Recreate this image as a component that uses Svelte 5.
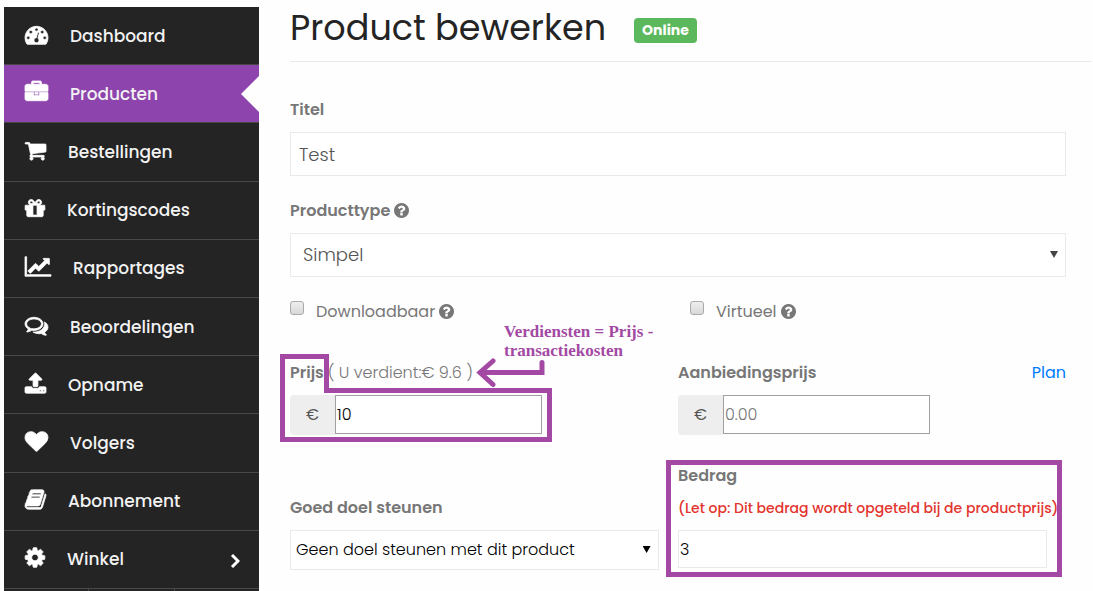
<script>
  const menu = [
    { label: 'Dashboard', box: '0 0 1792 1792', width: 23, path: 'M384 1152q0-53-37.5-90.5t-90.5-37.5-90.5 37.5-37.5 90.5 37.5 90.5 90.5 37.5 90.5-37.5 37.5-90.5zm192-448q0-53-37.5-90.5t-90.5-37.5-90.5 37.5-37.5 90.5 37.5 90.5 90.5 37.5 90.5-37.5 37.5-90.5zm428 481l101-382q6-26-7.5-48.5t-38.5-29.5-48 6.5-30 39.5l-101 382q-60 5-107 43.5t-63 98.5q-20 77 20 146t117 89 146-20 89-117q16-60-6-117t-72-91zm660-33q0-53-37.5-90.5t-90.5-37.5-90.5 37.5-37.5 90.5 37.5 90.5 90.5 37.5 90.5-37.5 37.5-90.5zm-640-640q0-53-37.5-90.5t-90.5-37.5-90.5 37.5-37.5 90.5 37.5 90.5 90.5 37.5 90.5-37.5 37.5-90.5zm448 192q0-53-37.5-90.5t-90.5-37.5-90.5 37.5-37.5 90.5 37.5 90.5 90.5 37.5 90.5-37.5 37.5-90.5zm320 448q0 261-141 483-19 29-54 29h-1402q-35 0-54-29-141-221-141-483 0-182 71-348t191-286 286-191 348-71 348 71 286 191 191 286 71 348z' },
    { label: 'Producten', active: true, box: '0 0 1792 1792', width: 23, path: 'M640 256h512v-128h-512v128zm1152 640v480q0 66-47 113t-113 47h-1472q-66 0-113-47t-47-113v-480h672v160q0 26 19 45t45 19h320q26 0 45-19t19-45v-160h672zm-768 0v128h-256v-128h256zm768-480v384h-1792v-384q0-66 47-113t113-47h352v-160q0-40 28-68t68-28h576q40 0 68 28t28 68v160h352q66 0 113 47t47 113z' },
    { label: 'Bestellingen', box: '64 0 1664 1792', width: 21, path: 'M704 1536q0 52-38 90t-90 38-90-38-38-90 38-90 90-38 90 38 38 90zm896 0q0 52-38 90t-90 38-90-38-38-90 38-90 90-38 90 38 38 90zm128-1088v512q0 24-16.5 42.5t-40.5 21.5l-1044 122q13 60 13 70 0 16-24 64h920q26 0 45 19t19 45-19 45-45 19h-1024q-26 0-45-19t-19-45q0-11 8-31.5t16-36 21.5-40 15.5-29.5l-177-823h-204q-26 0-45-19t-19-45 19-45 45-19h256q16 0 28.5 6.5t19.5 15.5 13 24.5 8 26 5.5 29.5 4.5 26h1201q26 0 45 19t19 45z' },
    { label: 'Kortingscodes', box: '128 0 1536 1792', width: 20, path: 'M1056 1356v-716h-320v716q0 25 18 38.5t46 13.5h192q28 0 46-13.5t18-38.5zm-456-844h195l-126-161q-26-31-69-31-40 0-68 28t-28 68 28 68 68 28zm688-96q0-40-28-68t-68-28q-43 0-69 31l-125 161h194q40 0 68-28t28-68zm376 256v320q0 14-9 23t-23 9h-96v416q0 40-28 68t-68 28h-1088q-40 0-68-28t-28-68v-416h-96q-14 0-23-9t-9-23v-320q0-14 9-23t23-9h440q-93 0-158.5-65.5t-65.5-158.5 65.5-158.5 158.5-65.5q107 0 168 77l128 165 128-165q61-77 168-77 93 0 158.5 65.5t65.5 158.5-65.5 158.5-158.5 65.5h440q14 0 23 9t9 23z' },
    { label: 'Rapportages', box: '0 0 2048 1792', width: 26, path: 'M2048 1536v128h-2048v-1536h128v1408h1920zm-128-1248v435q0 21-19.5 29.5t-35.5-7.5l-121-121-633 633q-10 10-23 10t-23-10l-233-233-416 416-192-192 585-585q10-10 23-10t23 10l233 233 464-464-121-121q-16-16-7.5-35.5t29.5-19.5h435q14 0 23 9t9 23z' },
    { label: 'Beoordelingen', box: '0 0 1792 1792', width: 23, path: 'M704 384q-153 0-286 52t-211.5 141-78.5 191q0 82 53 158t149 132l97 56-35 84q34-20 62-39l44-31 53 10q78 14 153 14 153 0 286-52t211.5-141 78.5-191-78.5-191-211.5-141-286-52zm0-128q191 0 353.5 68.5t256.5 186.5 94 257-94 257-256.5 186.5-353.5 68.5q-86 0-176-16-124 88-278 128-36 9-86 16h-3q-11 0-20.5-8t-11.5-21q-1-3-1-6.5t.5-6.5 2-6l2.5-5 3.5-5.5 4-5 4.5-5 4-4.5q5-6 23-25t26-29.5 22.5-29 25-38.5 20.5-44q-124-72-195-177t-71-224q0-139 94-257t256.5-186.5 353.5-68.5zm822 1169q10 24 20.5 44t25 38.5 22.5 29 26 29.5 23 25q1 1 4 4.5t4.5 5 4 5 3.5 5.5l2.5 5 2 6 .5 6.5-1 6.5q-3 14-13 22t-22 7q-50-7-86-16-154-40-278-128-90 16-176 16-271 0-472-132 58 4 88 4 161 0 309-45t264-129q125-92 192-212t67-254q0-77-23-152 129 71 204 178t75 230q0 120-71 224.5t-195 176.5z' },
    { label: 'Opname', box: '64 0 1664 1792', width: 21, path: 'M1344 1472q0-26-19-45t-45-19-45 19-19 45 19 45 45 19 45-19 19-45zm256 0q0-26-19-45t-45-19-45 19-19 45 19 45 45 19 45-19 19-45zm128-224v320q0 40-28 68t-68 28h-1472q-40 0-68-28t-28-68v-320q0-40 28-68t68-28h427q21 56 70.5 92t110.5 36h256q61 0 110.5-36t70.5-92h427q40 0 68 28t28 68zm-325-648q-17 40-59 40h-256v448q0 26-19 45t-45 19h-256q-26 0-45-19t-19-45v-448h-256q-42 0-59-40-17-39 14-69l448-448q18-19 45-19t45 19l448 448q31 30 14 69z' },
    { label: 'Volgers', box: '0 0 1792 1792', width: 23, path: 'M896 1664q-26 0-44-18l-624-602q-10-8-27.5-26t-55.5-65.5-68-97.5-53.5-121-23.5-138q0-220 127-344t351-124q62 0 126.5 21.5t120 58 95.5 68.5 76 68q36-36 76-68t95.5-68.5 120-58 126.5-21.5q224 0 351 124t127 344q0 221-229 450l-623 600q-18 18-44 18z' },
    { label: 'Abonnement', box: '64 0 1664 1792', width: 21, path: 'M1703 478q40 57 18 129l-275 906q-19 64-76.5 107.5t-122.5 43.5h-923q-77 0-148.5-53.5t-99.5-131.5q-24-67-2-127 0-4 3-27t4-37q1-8-3-21.5t-3-19.5q2-11 8-21t16.5-23.5 16.5-23.5q23-38 45-91.5t30-91.5q3-10 .5-30t-.5-28q3-11 17-28t17-23q21-36 42-92t25-90q1-9-2.5-32t.5-28q4-13 22-30.5t22-22.5q19-26 42.5-84.5t27.5-96.5q1-8-3-25.5t-2-26.5q2-8 9-18t18-23 17-21q8-12 16.5-30.5t15-35 16-36 19.5-32 26.5-23.5 36-11.5 47.5 5.5l-1 3q38-9 51-9h761q74 0 114 56t18 130l-274 906q-36 119-71.5 153.5t-128.5 34.5h-869q-27 0-38 15-11 16-1 43 24 70 144 70h923q29 0 56-15.5t35-41.5l300-987q7-22 5-57 38 15 59 43zm-1064 2q-4 13 2 22.5t20 9.5h608q13 0 25.5-9.5t16.5-22.5l21-64q4-13-2-22.5t-20-9.5h-608q-13 0-25.5 9.5t-16.5 22.5zm-83 256q-4 13 2 22.5t20 9.5h608q13 0 25.5-9.5t16.5-22.5l21-64q4-13-2-22.5t-20-9.5h-608q-13 0-25.5 9.5t-16.5 22.5z' },
    { label: 'Winkel', submenu: true, box: '128 0 1536 1792', width: 20, path: 'M1152 896q0-106-75-181t-181-75-181 75-75 181 75 181 181 75 181-75 75-181zm512-109v222q0 12-8 23t-20 13l-185 28q-19 54-39 91 35 50 107 138 10 12 10 25t-9 23q-27 37-99 108t-94 71q-12 0-26-9l-138-108q-44 23-91 38-16 136-29 186-7 28-36 28h-222q-14 0-24.5-8.5t-11.5-21.5l-28-184q-49-16-90-37l-141 107q-10 9-25 9-14 0-25-11-126-114-165-168-7-10-7-23 0-12 8-23 15-21 51-66.5t54-70.5q-27-50-41-99l-183-27q-13-2-21-12.5t-8-23.5v-222q0-12 8-23t19-13l186-28q14-46 39-92-40-57-107-138-10-12-10-24 0-10 9-23 26-36 98.5-107.5t94.5-71.5q13 0 26 10l138 107q44-23 91-38 16-136 29-186 7-28 36-28h222q14 0 24.5 8.5t11.5 21.5l28 184q49 16 90 37l142-107q9-9 24-9 13 0 25 10 129 119 165 170 7 8 7 22 0 12-8 23-15 21-51 66.5t-54 70.5q26 50 41 98l183 28q13 2 21 12.5t8 23.5z' }
  ];

  let title = $state('Test');
  let price = $state('10');
  let salePrice = $state('');
  let amount = $state('3');
</script>

{#snippet help()}
  <svg class="help" viewBox="128 128 1536 1536" aria-hidden="true">
    <path d="M1024 1376v-192q0-14-9-23t-23-9h-192q-14 0-23 9t-9 23v192q0 14 9 23t23 9h192q14 0 23-9t9-23zm256-672q0-88-55.5-163t-138.5-116-170-41q-243 0-371 213-15 24 8 42l132 100q7 6 19 6 16 0 25-12 53-68 86-92 34-24 86-24 48 0 85.5 26t37.5 59q0 38-20 61t-68 45q-63 28-115.5 86.5t-52.5 125.5v36q0 14 9 23t23 9h192q14 0 23-9t9-23q0-19 21.5-49.5t54.5-49.5q32-18 49-28.5t46-35 44.5-48 28-60.5 12.5-81zm384 192q0 209-103 385.5t-279.5 279.5-385.5 103-385.5-103-279.5-279.5-103-385.5 103-385.5 279.5-279.5 385.5-103 385.5 103 279.5 279.5 103 385.5z" />
  </svg>
{/snippet}

<div class="dashboard">
  <nav class="sidebar">
    <ul>
      {#each menu as item}
        <li class:active={item.active}>
          <a href="#{item.label.toLowerCase()}">
            <svg class="icon" viewBox={item.box} width={item.width} height="23" aria-hidden="true"><path d={item.path} /></svg>
            <span>{item.label}</span>
            {#if item.submenu}
              <svg class="chevron" viewBox="0 0 10 14" aria-hidden="true"><path d="M2 1l6 6-6 6" /></svg>
            {/if}
          </a>
        </li>
      {/each}
    </ul>
    <div class="common-links"><i></i><i></i><i></i></div>
  </nav>

  <main>
    <header>
      <h1>Product bewerken</h1>
      <span class="badge">Online</span>
    </header>

    <form>
      <div class="field">
        <label for="title">Titel</label>
        <input id="title" class="wide" type="text" bind:value={title} />
      </div>

      <div class="field">
        <label for="type">Producttype {@render help()}</label>
        <div class="select">
          <select id="type" class="wide">
            <option>Simpel</option>
          </select>
        </div>
      </div>

      <div class="checks">
        <label><input type="checkbox" /><span>Downloadbaar {@render help()}</span></label>
        <label><input type="checkbox" /><span>Virtueel {@render help()}</span></label>
      </div>

      <div class="columns">
        <div class="field price">
          <label for="price">Prijs <span class="earning">( U verdient:€ 9.6 )</span></label>
          <div class="group">
            <span>€</span>
            <input id="price" type="text" bind:value={price} />
          </div>
          <svg class="marks" viewBox="0 0 272 88" aria-hidden="true">
            <path d="M2.5 2.5H46.5V36.5H269.5V85.5H2.5Z" />
            <path class="arrow" d="M262 8.500V18.500H200M213 7L200 18.500L213 30.500" />
          </svg>
          <p class="note">Verdiensten = Prijs -<br />transactiekosten</p>
        </div>
        <div class="field">
          <div class="label-row">
            <label for="sale">Aanbiedingsprijs</label>
            <a href="#plan">Plan</a>
          </div>
          <div class="group">
            <span>€</span>
            <input id="sale" type="text" placeholder="0.00" bind:value={salePrice} />
          </div>
        </div>
      </div>

      <div class="columns charity">
        <div class="field">
          <label for="charity">Goed doel steunen</label>
          <div class="select">
            <select id="charity">
              <option>Geen doel steunen met dit product</option>
            </select>
          </div>
        </div>
        <div class="field framed">
          <label for="amount">Bedrag <small>(Let op: Dit bedrag wordt opgeteld bij de productprijs)</small></label>
          <input id="amount" type="text" bind:value={amount} />
        </div>
      </div>
    </form>
  </main>
</div>

<style>
  :global(body) {
    margin: 0;
    background: #fefefe;
  }

  .dashboard,
  .dashboard * {
    box-sizing: border-box;
  }

  .dashboard {
    display: flex;
    min-height: 100vh;
    font-family: Poppins, Inter, 'Liberation Sans', sans-serif;
    font-size: 16px;
    line-height: 24px;
    color: #777;
  }

  input,
  select {
    font: inherit;
    font-weight: 300;
    border-radius: 0;
    margin: 0;
    background: #fff;
  }

  a {
    color: #007bff;
    text-decoration: none;
  }

  .sidebar {
    display: flex;
    flex-direction: column;
    flex: none;
    width: 255px;
    margin: 7px 0 0 4px;
    background: #242424;
  }

  .sidebar ul {
    display: flex;
    flex-direction: column;
    flex: 1;
    margin: 0;
    padding: 0;
    list-style: none;
  }

  .sidebar li {
    display: flex;
    flex: 1 0 auto;
    position: relative;
    border-bottom: 1px solid #484848;
  }

  .sidebar a {
    display: flex;
    flex: 1;
    align-items: center;
    gap: 22px;
    padding: 0 19px 0 21px;
    font-size: 17px;
    font-weight: 500;
    color: #f2f2f2;
  }

  .sidebar .icon {
    flex: none;
    margin-bottom: 3px;
    fill: #fff;
    stroke: #fff;
    stroke-width: 60;
    overflow: visible;
  }

  .sidebar .active {
    background: #8e44ad;
  }

  .active::after {
    content: '';
    position: absolute;
    right: 0;
    top: calc(50% - 18px);
    border: 18px solid transparent;
    border-left: 0;
    border-right-color: #fefefe;
  }

  .chevron {
    flex: none;
    width: 10px;
    height: 14px;
    margin: 4px 0 0 auto;
    fill: none;
    stroke: #fff;
    stroke-width: 3;
  }

  .common-links {
    display: flex;
    height: 2px;
  }

  .common-links i {
    flex: 1;
  }

  .common-links i + i {
    border-left: 1px solid #484848;
  }

  main {
    flex: 1;
    min-width: 0;
    padding: 0 1px 0 31px;
  }

  header {
    display: flex;
    align-items: center;
    gap: 28px;
    padding-bottom: 5px;
    border-bottom: 1px solid #eaeaea;
  }

  h1 {
    margin: 0;
    font-size: 35px;
    font-weight: 400;
    line-height: 56px;
    color: #242424;
  }

  .badge {
    margin-top: 5px;
    padding: 0 8px;
    border-radius: 4px;
    background: #5cb85c;
    font-size: 14px;
    font-weight: 700;
    line-height: 25px;
    color: #fff;
  }

  form {
    display: flex;
    flex-direction: column;
    gap: 23px;
    margin: 36px 26px 0 0;
  }

  .field {
    display: flex;
    flex-direction: column;
    gap: 10px;
    position: relative;
  }

  .field label {
    font-weight: 600;
  }

  .help {
    width: 15px;
    height: 15px;
    vertical-align: -2px;
    fill: #777;
  }

  .wide {
    width: 100%;
    height: 44px;
    padding: 0 8px;
    border: 1px solid #eaeaea;
    font-size: 18px;
    color: #555;
  }

  .select {
    position: relative;
    color: #444;
  }

  .select select {
    display: block;
    width: 100%;
    border: 1px solid #eaeaea;
    appearance: none;
  }

  .select .wide {
    padding: 0 12px;
  }

  .select::after {
    content: '';
    position: absolute;
    top: calc(50% - 4px);
    right: 8px;
    width: 8px;
    height: 7px;
    background: currentColor;
    clip-path: polygon(0 0, 100% 0, 50% 100%);
  }

  .checks {
    display: grid;
    grid-template-columns: 1fr 1fr;
    gap: 24px;
    margin-bottom: 14px;
  }

  .checks label {
    display: flex;
    gap: 12px;
  }

  .checks input {
    width: 14px;
    height: 14px;
    margin-top: 1px;
    border: 1px solid #aaa;
    border-radius: 3px;
    background: linear-gradient(#eee, #d8d8d8);
    appearance: none;
  }

  .checks input:checked {
    background: #8e44ad;
  }

  .columns {
    display: grid;
    grid-template-columns: 1fr 1fr;
  }

  .charity {
    align-items: end;
    margin-top: 6px;
  }

  .earning {
    font-weight: 300;
  }

  .label-row {
    display: flex;
    justify-content: space-between;
  }

  .group {
    display: flex;
    align-items: flex-start;
    width: 65%;
  }

  .group span {
    flex: none;
    width: 45px;
    border-radius: 4px 0 0 4px;
    background: #eee;
    line-height: 40px;
    text-align: center;
    color: #555;
  }

  .group input {
    flex: 1;
    min-width: 0;
    height: 39px;
    padding: 0 1px;
    border: 1px solid #a0a0a0;
    color: #000;
  }

  .group input::placeholder {
    color: #757575;
  }

  /* hand-drawn style marks laid over the price field */
  .marks {
    position: absolute;
    top: -7px;
    left: -10px;
    width: 272px;
    height: 88px;
    fill: none;
    stroke: #a349a4;
    stroke-width: 5;
    pointer-events: none;
  }

  .arrow {
    stroke-linecap: round;
  }

  .note {
    position: absolute;
    top: -39px;
    left: 214px;
    margin: 0;
    font: bold 17px/19px 'Liberation Serif', serif;
    color: #a349a4;
    white-space: nowrap;
  }

  .charity .select {
    width: 95%;
    color: #000;
  }

  .charity select {
    height: 40px;
    padding: 0 5px;
    color: #000;
  }

  .framed {
    padding-bottom: 2px;
  }

  .framed label {
    display: flex;
    flex-direction: column;
    gap: 8px;
  }

  .framed small {
    font-size: 14px;
    font-weight: 500;
    line-height: 24px;
    color: #e3342f;
    white-space: nowrap;
  }

  .framed input {
    width: 95%;
    height: 38px;
    padding: 0 1px;
    border: 1px solid #eaeaea;
    color: #000;
  }

  .framed::before {
    content: '';
    position: absolute;
    inset: -4px 4px -7px -12px;
    border: 5px solid #a349a4;
    pointer-events: none;
  }
</style>
